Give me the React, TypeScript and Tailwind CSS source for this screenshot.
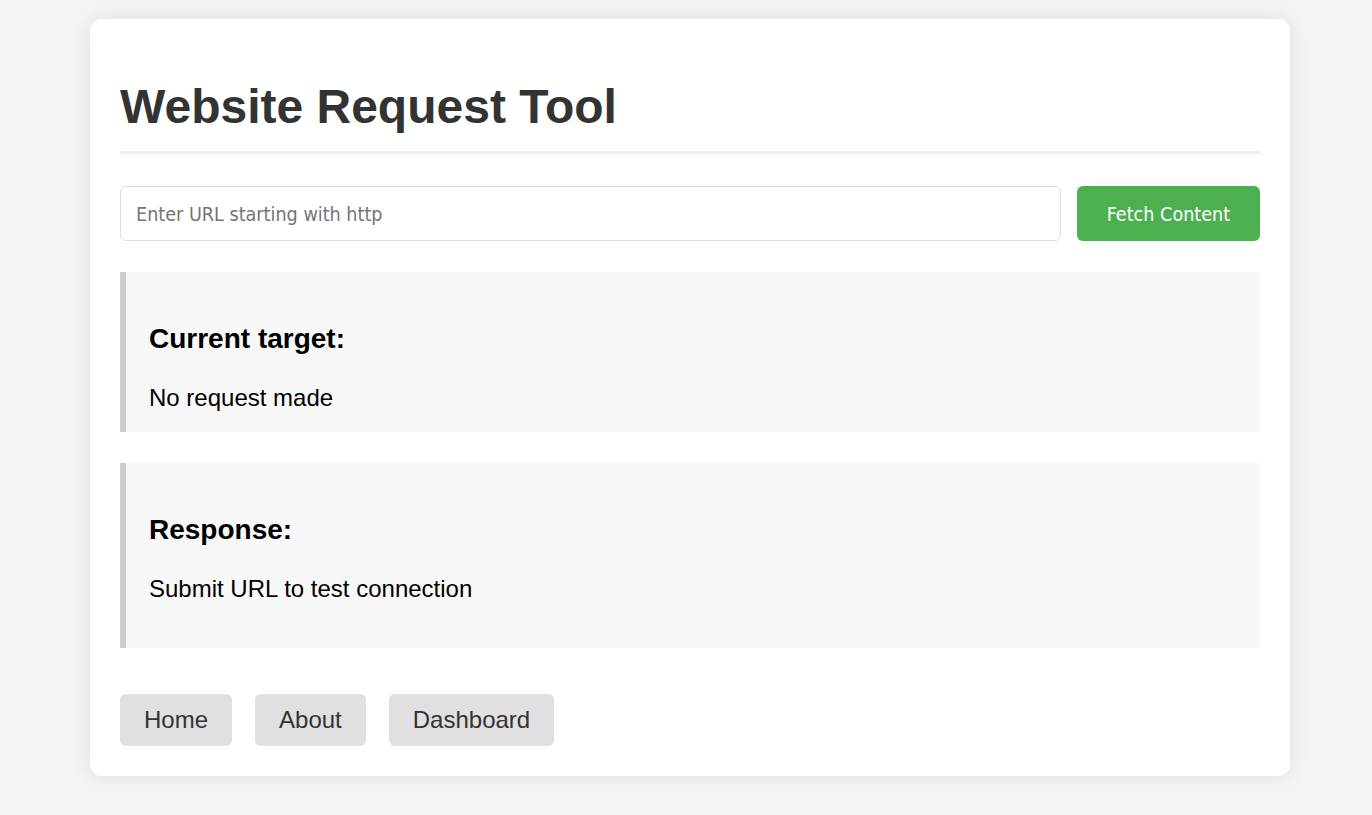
export default function App() {
  return (
    <div className="min-h-screen bg-[#f4f4f4] pt-[19px] pb-[40px] font-['Liberation_Sans',Arial,sans-serif]">
      <div className="ml-[90px] w-[1200px] rounded-[12px] bg-white px-[30px] pt-[60px] pb-[30px] shadow-[0_0_22px_rgba(0,0,0,0.09)]">
        <h1 className="border-b-[3px] border-[#eeeeee] pb-[17px] text-[48px] leading-[55px] font-bold text-[#333333]">
          Website Request Tool
        </h1>

        <div className="mt-[32px] flex gap-[16px]">
          <input
            type="text"
            placeholder="Enter URL starting with http"
            className="h-[55px] flex-1 rounded-[6px] border border-[#dddddd] px-[15px] pt-[2px] font-['DejaVu_Sans_Condensed','DejaVu_Sans',sans-serif] text-[19.6px] text-[#333] outline-none placeholder:text-[#757575]"
          />
          <button className="h-[55px] w-[183px] rounded-[6px] bg-[#4caf50] pt-[2px] font-['DejaVu_Sans_Condensed','DejaVu_Sans',sans-serif] text-[19.6px] text-white">
            Fetch Content
          </button>
        </div>

        <div className="mt-[31px] border-l-[6px] border-[#cccccc] bg-[#f8f8f8] pt-[51px] pb-[20px] pl-[23px]">
          <h3 className="text-[28px] leading-[32px] font-bold text-black">Current target:</h3>
          <p className="mt-[29px] text-[24px] leading-[28px] text-black">No request made</p>
        </div>

        <div className="mt-[31px] border-l-[6px] border-[#cccccc] bg-[#f8f8f8] pt-[51px] pb-[45px] pl-[23px]">
          <h3 className="text-[28px] leading-[32px] font-bold text-black">Response:</h3>
          <p className="mt-[29px] text-[24px] leading-[28px] text-black">Submit URL to test connection</p>
        </div>

        <nav className="mt-[46px] flex gap-[23px]">
          {["Home", "About", "Dashboard"].map((label) => (
            <a
              key={label}
              href="#"
              className="rounded-[6px] bg-[#e0e0e0] px-[24px] py-[12px] text-[24px] leading-[28px] text-[#333333]"
            >
              {label}
            </a>
          ))}
        </nav>
      </div>
    </div>
  )
}
